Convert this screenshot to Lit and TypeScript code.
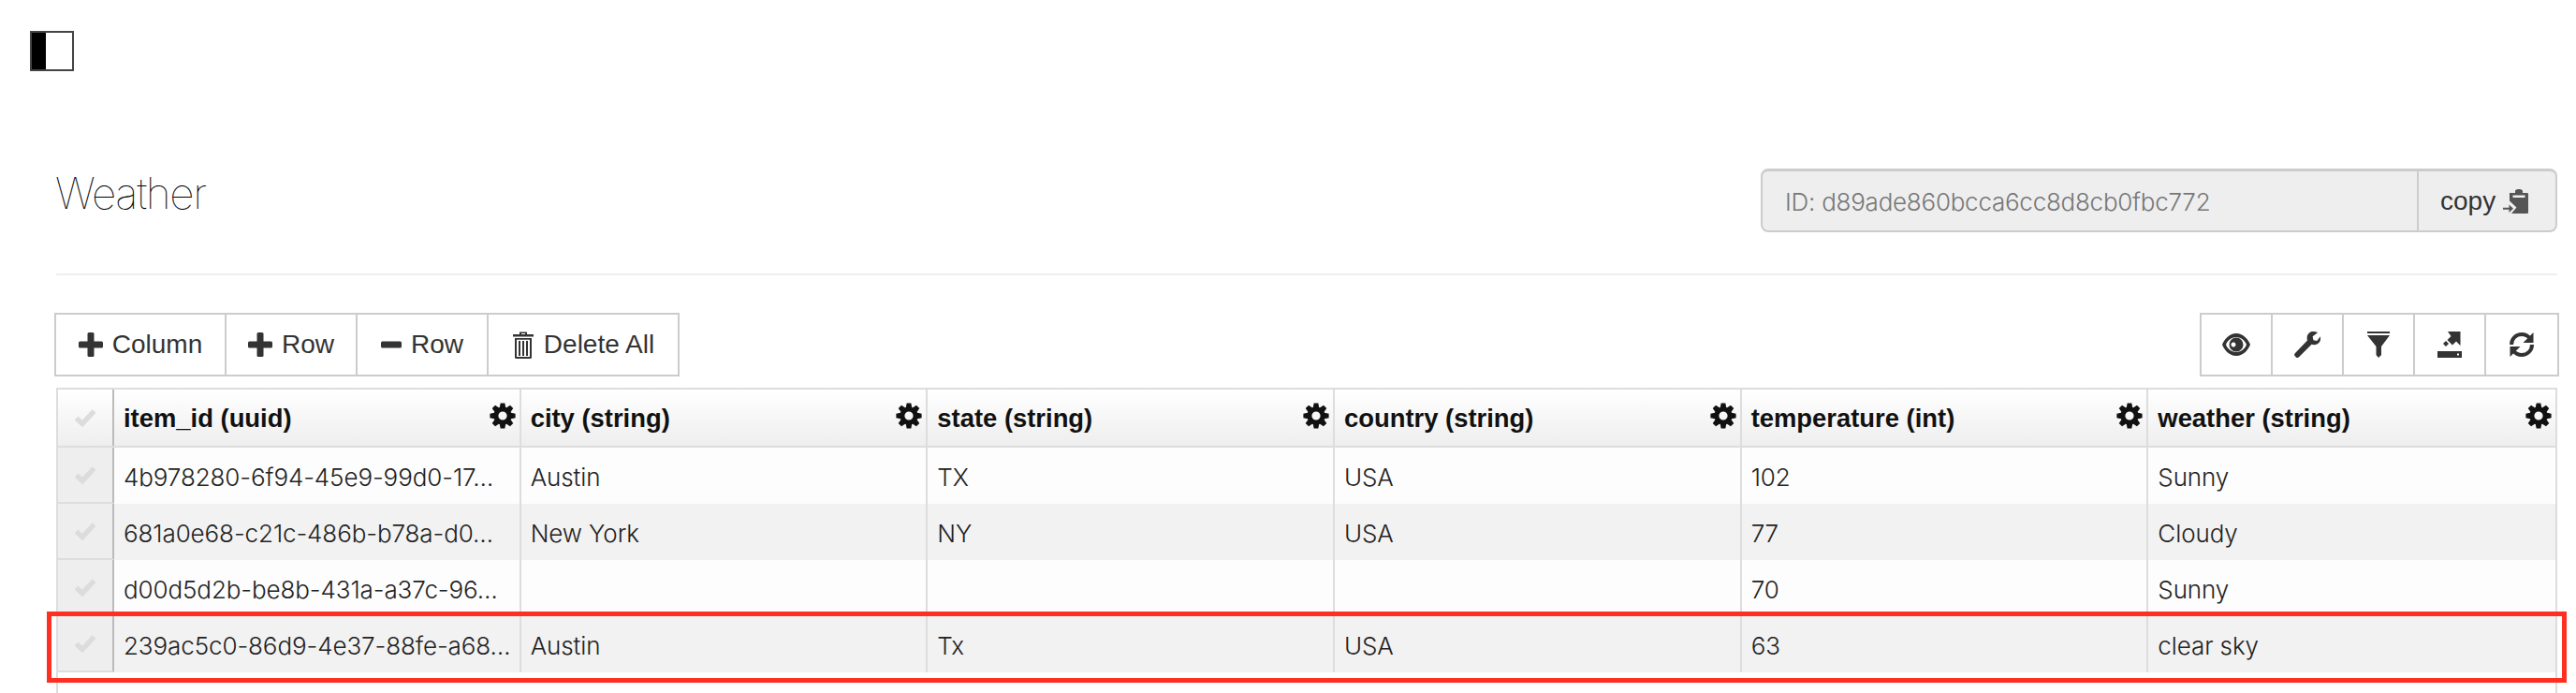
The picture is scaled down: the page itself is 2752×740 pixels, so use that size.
import { LitElement, html, css } from 'lit';
import { customElement } from 'lit/decorators.js';

const gearPath = () => {
  // 8 tooth gear on a 28 box
  const pts: string[] = [];
  const teeth = 8;
  for (let i = 0; i < teeth; i++) {
    const a = (i / teeth) * Math.PI * 2 - Math.PI / 2;
    const w = 0.21;
    const p = (r: number, t: number) =>
      `${(14 + r * Math.cos(t)).toFixed(2)} ${(14 + r * Math.sin(t)).toFixed(2)}`;
    pts.push(`${i ? 'L' : 'M'}${p(9.6, a - w - 0.13)}`, `L${p(13.8, a - w + 0.04)}`, `L${p(13.8, a + w - 0.04)}`, `L${p(9.6, a + w + 0.13)}`);
  }
  return `${pts.join(' ')}Z M14 9.4a4.6 4.6 0 1 0 0 9.2a4.6 4.6 0 1 0 0-9.2Z`;
};

const gear = html`<svg class="gear" viewBox="0 0 28 28" width="28" height="28"><path fill-rule="evenodd" fill="#111" d=${gearPath()}></path></svg>`;
const check = html`<svg viewBox="0 0 24 20" width="24" height="20"><path d="M2.5 10.5 9 16.5 21.5 3" fill="none" stroke="#dcdcdc" stroke-width="5.5"></path></svg>`;

const plus = html`<svg viewBox="0 0 26 26" width="26" height="26" fill="#333"><rect x="9.5" y="0" width="7" height="26" rx="1.5"></rect><rect x="0" y="9.5" width="26" height="7" rx="1.5"></rect></svg>`;
const minus = html`<svg viewBox="0 0 22 26" width="22" height="26" fill="#333"><rect x="0" y="9.5" width="22" height="7" rx="1.5"></rect></svg>`;
const trash = html`<svg viewBox="0 0 24 30" width="24" height="30" fill="#333"><path d="M8 4V1.5h8V4h7v2.6H1V4Zm2-1V4h4V3Z"></path><path fill-rule="evenodd" d="M3 8h18v20.5a1.5 1.5 0 0 1-1.5 1.5h-15A1.5 1.5 0 0 1 3 28.5Zm2 1.8V28h14V9.800Z"></path><path d="M7 11h2v16H7zM11 11h2v16h-2zM15 11h2v16h-2z"></path></svg>`;

const eye = html`<svg viewBox="0 0 30 24" width="30" height="24" fill="#333"><path fill-rule="evenodd" d="M15 0C23 0 28 7 30 12C28 17 23 24 15 24C7 24 2 17 0 12C2 7 7 0 15 0ZM15 4C9.500 4 5.500 8 4 12C5.500 16 9.500 20 15 20C20.500 20 24.500 16 26 12C24.500 8 20.500 4 15 4Z"></path><path fill-rule="evenodd" d="M15 4.500a7.500 7.500 0 1 1 0 15a7.500 7.500 0 0 1 0-15ZM12 9.500a2.500 2.500 0 1 0 0.010 0Z"></path></svg>`;
const wrench = html`<svg viewBox="0 0 28 28" width="28" height="28" fill="#333"><path d="M19 0C22 -0.300 24 0.500 25 1.200L19.600 5.300 20.500 9.300 24.200 10 28 5.200C28.600 8.500 27.600 11 25.800 12.600 23.800 14.300 21 14.600 18.500 13.700L5 27.200C4 28.200 3 28.200 2 27.400L0.800 26.200C-0.100 25.300 -0.100 24.200 0.800 23.300L14 9.500C13.300 7 13.600 4.500 15 2.600 16 1.200 17.400 0.300 19 0Z"></path></svg>`;
const filter = html`<svg viewBox="0 0 24 28" width="24" height="28" fill="#333"><rect x="0" y="0" width="24" height="2"></rect><path d="M0 4H24L15 16V25L12 28 9.500 25V16Z"></path></svg>`;
const exportIcon = html`<svg viewBox="0 0 26 28" width="26" height="28" fill="#333"><path d="M11 0H24.500V15L20 10.500 16 14.500 10.500 9 14.500 5Z"></path><path d="M6 13 9 10 12 13 9 16Z"></path><path fill-rule="evenodd" d="M0 21H26V28H0ZM21 23.500v2h2v-2Z"></path></svg>`;
const refresh = html`<svg viewBox="0 0 28 28" width="28" height="28" fill="none"><path d="M3 14C3 7.500 8 3 14 3C18 3 21 5 23 7.500" stroke="#333" stroke-width="4"></path><path d="M25 14C25 20.500 20 25 14 25C10 25 7 23 5 20.500" stroke="#333" stroke-width="4"></path><path d="M26.500 1V12H15.500Z" fill="#333"></path><path d="M1.500 27V16H12.500Z" fill="#333"></path></svg>`;
const clip = html`<svg viewBox="0 0 27 26" width="27" height="26"><path fill="#555" d="M7 4H13V2C13 .5 15.500 0 17 0S21 .5 21 2V4H25.500C26.500 4 27 4.500 27 5.500V24.500C27 25.500 26.500 26 25.500 26H9L14.500 19.500 7 12.500Z"></path><path fill="#eee" d="M10.500 6.500H23.500V9H10.500Z"></path><path fill="#555" d="M0 19.800H6.500V16.500L11 20.800 6.500 25V21.800H0Z"></path></svg>`;

const COLUMNS = ['item_id (uuid)', 'city (string)', 'state (string)', 'country (string)', 'temperature (int)', 'weather (string)'];
const ROWS = [
  ['4b978280-6f94-45e9-99d0-17…', 'Austin', 'TX', 'USA', '102', 'Sunny'],
  ['681a0e68-c21c-486b-b78a-d0…', 'New York', 'NY', 'USA', '77', 'Cloudy'],
  ['d00d5d2b-be8b-431a-a37c-96…', '', '', '', '70', 'Sunny'],
  ['239ac5c0-86d9-4e37-88fe-a68…', 'Austin', 'Tx', 'USA', '63', 'clear sky'],
];

@customElement('app-root')
export class AppRoot extends LitElement {
  static styles = css`
    :host {
      display: flex;
      flex-direction: column;
      height: 740px;
      overflow: hidden;
      padding-top: 33px;
      box-sizing: border-box;
      font-family: 'Inter', 'Liberation Sans', sans-serif;
      font-weight: 300;
      font-size: 26px;
      letter-spacing: -0.1px;
      color: #222;
      background: #fff;
    }

    .sidebar-toggle {
      display: flex;
      flex: none;
      width: 47px;
      height: 43px;
      margin-left: 32px;
      box-sizing: border-box;
      border: 2px solid #444;
    }

    .sidebar-toggle span {
      width: 15px;
      background: #000;
    }

    .page {
      display: flex;
      flex-direction: column;
      flex: 1;
      width: 2676px;
      margin-left: 58px;
    }

    .title-row {
      display: flex;
      justify-content: space-between;
      margin-top: 104px;
    }

    h1 {
      margin: 0 0 0 1px;
      font-size: 46px;
      font-weight: 100;
      line-height: 52px;
      letter-spacing: -1.4px;
      color: #000;
    }

    .id-box {
      display: flex;
      width: 851px;
      height: 68px;
      margin-right: 2px;
      box-sizing: border-box;
      border: 2px solid #ccc;
      border-top-width: 3px;
      border-radius: 8px;
      background: #eee;
      color: #777;
    }

    .id-box .value {
      flex: 1;
      display: flex;
      align-items: center;
      padding: 2px 0 0 24px;
      letter-spacing: -0.25px;
    }

    .id-box .copy {
      display: flex;
      align-items: center;
      gap: 8px;
      width: 148px;
      padding-left: 23px;
      box-sizing: border-box;
      border-left: 2px solid #ccc;
      color: #333;
      font-family: 'Liberation Sans', sans-serif;
      font-size: 28px;
      font-weight: 400;
      letter-spacing: 0;
    }

    hr {
      height: 2px;
      margin: 44px 2px 40px 2px;
      border: 0;
      background: #eee;
    }

    .toolbar {
      display: flex;
      justify-content: space-between;
      margin-bottom: 12px;
    }

    .group {
      display: flex;
      height: 68px;
      box-sizing: border-box;
      border: 2px solid #ccc;
      background: #fff;
      color: #333;
      font-family: 'Liberation Sans', sans-serif;
      font-size: 28px;
      font-weight: 400;
      letter-spacing: 0;
    }

    .group .btn {
      display: flex;
      align-items: center;
      justify-content: center;
      gap: 10px;
      box-sizing: border-box;
      border-left: 2px solid #ccc;
    }

    .group .btn:first-child {
      border-left: 0;
    }

    .add-column {
      width: 180px;
    }

    .add-row,
    .remove-row {
      width: 140px;
    }

    .delete-all {
      width: 204px;
    }

    .icon-btn {
      width: 76px;
    }

    .icon-btn:first-child {
      width: 74px;
    }

    .icon-btn:last-child {
      width: 78px;
    }

    .table {
      flex: 1;
      margin: 0 2px;
      border-left: 2px solid #ddd;
      border-right: 2px solid #ddd;
    }

    .row {
      position: relative;
      display: grid;
      grid-template-columns: 60px repeat(6, 1fr);
      height: 60px;
    }

    .row.odd {
      background: #fdfdfd;
    }

    .row.even {
      background: #f2f2f2;
    }

    .row.head {
      height: 64px;
      border-top: 2px solid #ddd;
      border-bottom: 2px solid #ddd;
      box-sizing: border-box;
      background: linear-gradient(#fff, #eee);
      font-family: 'Liberation Sans', sans-serif;
      font-size: 27.4px;
      font-weight: 700;
      letter-spacing: 0;
      color: #111;
    }

    .row.flagged::after {
      content: '';
      position: absolute;
      inset: -5px -12px -11px -12px;
      border: 5px solid #ff3021;
      pointer-events: none;
    }

    .cell {
      display: flex;
      align-items: center;
      justify-content: space-between;
      min-width: 0;
      padding: 2px 4px 0 10px;
      box-sizing: border-box;
      border-right: 2px solid #ddd;
      white-space: nowrap;
    }

    .cell:last-child {
      border-right: 0;
    }

    .gear {
      align-self: flex-start;
      margin-top: 12px;
    }

    .check {
      justify-content: center;
      padding: 0;
      border-right: 2px solid #bbb;
      background: #eee;
    }

    .row:not(.head) .check {
      border-bottom: 2px solid #ddd;
    }

    .head .check {
      background: transparent;
    }
  `;

  render() {
    return html`
      <div class="sidebar-toggle"><span></span></div>
      <div class="page">
        <div class="title-row">
          <h1>Weather</h1>
          <div class="id-box">
            <div class="value">ID: d89ade860bcca6cc8d8cb0fbc772</div>
            <div class="copy">copy ${clip}</div>
          </div>
        </div>
        <hr />
        <div class="toolbar">
          <div class="group">
            <div class="btn add-column">${plus} Column</div>
            <div class="btn add-row">${plus} Row</div>
            <div class="btn remove-row">${minus} Row</div>
            <div class="btn delete-all">${trash} Delete All</div>
          </div>
          <div class="group">
            <div class="btn icon-btn">${eye}</div>
            <div class="btn icon-btn">${wrench}</div>
            <div class="btn icon-btn">${filter}</div>
            <div class="btn icon-btn">${exportIcon}</div>
            <div class="btn icon-btn">${refresh}</div>
          </div>
        </div>
        <div class="table">
          <div class="row head">
            <div class="cell check">${check}</div>
            ${COLUMNS.map((c) => html`<div class="cell">${c}${gear}</div>`)}
          </div>
          ${ROWS.map(
            (r, i) => html`
              <div class="row ${i % 2 ? 'even' : 'odd'} ${i === 3 ? 'flagged' : ''}">
                <div class="cell check">${check}</div>
                ${r.map((v) => html`<div class="cell">${v}</div>`)}
              </div>
            `,
          )}
        </div>
      </div>
    `;
  }
}
